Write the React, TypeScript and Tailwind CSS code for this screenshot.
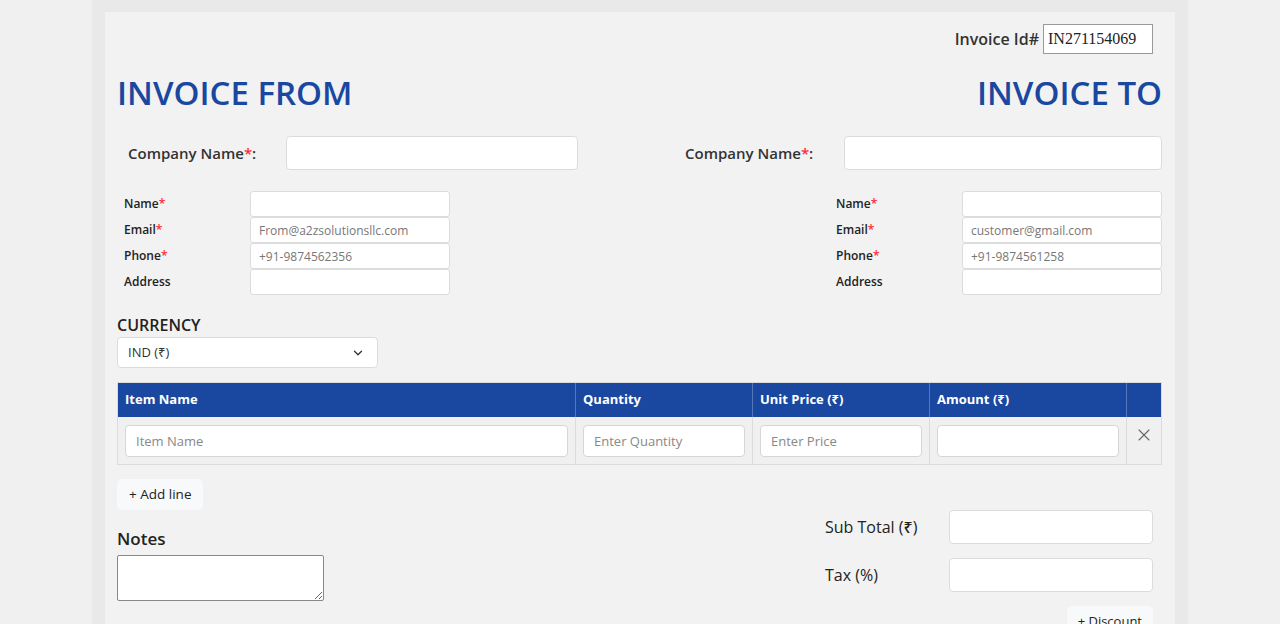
import React from 'react';
import { ChevronDown, X } from 'lucide-react';

const font = { fontFamily: '"Open Sans", "Noto Sans", sans-serif' };

interface ContactField {
  label: string;
  required: boolean;
  placeholder: string;
}

const fromFields: ContactField[] = [
  { label: 'Name', required: true, placeholder: '' },
  { label: 'Email', required: true, placeholder: 'From@a2zsolutionsllc.com' },
  { label: 'Phone', required: true, placeholder: '+91-9874562356' },
  { label: 'Address', required: false, placeholder: '' },
];

const toFields: ContactField[] = [
  { label: 'Name', required: true, placeholder: '' },
  { label: 'Email', required: true, placeholder: 'customer@gmail.com' },
  { label: 'Phone', required: true, placeholder: '+91-9874561258' },
  { label: 'Address', required: false, placeholder: '' },
];

const ContactBlock: React.FC<{ fields: ContactField[]; labelClass: string }> = ({ fields, labelClass }) => (
  <div className="flex flex-col">
    {fields.map(f => (
      <div key={f.label} className="flex items-center h-[26px]">
        <label className={`${labelClass} text-[12px] font-semibold text-[#222]`}>
          {f.label}
          {f.required && <span className="text-red-500">*</span>}
        </label>
        <input
          className="w-[200px] h-[26px] bg-white border border-[#dcdcdc] rounded-[3px] px-2 text-[12px] text-[#333] placeholder:text-[#777] outline-none"
          placeholder={f.placeholder}
        />
      </div>
    ))}
  </div>
);

const App: React.FC = () => {
  return (
    <div className="min-h-screen bg-[#f0f0f0]" style={font}>
      <div className="mx-auto w-[1096px] bg-[#e9e9e9] px-[13px] pt-3">
        <div className="bg-[#f2f2f2] pl-3 pr-[13px] pt-3 pb-10">
          {/* Invoice id */}
          <div className="flex justify-end items-center gap-1 pr-[9px] h-[30px]">
            <span className="text-[16px] font-semibold text-[#333]">Invoice Id#</span>
            <input
              className="w-[110px] h-[30px] bg-white border border-[#999] px-1 text-[16px] text-[#222] outline-none"
              style={{ fontFamily: '"Liberation Serif", serif' }}
              defaultValue="IN271154069"
            />
          </div>

          {/* Headings */}
          <div className="flex justify-between items-center mt-[16px] h-[46px]">
            <h1 className="text-[33px] font-semibold text-[#1a47a0]">INVOICE FROM</h1>
            <h1 className="text-[33px] font-semibold text-[#1a47a0]">INVOICE TO</h1>
          </div>

          {/* Company names */}
          <div className="flex justify-between items-center mt-[20px]">
            <div className="flex items-center">
              <label className="pl-[11px] w-[169px] text-[15px] font-semibold text-[#333]">
                Company Name<span className="text-red-500">*</span>:
              </label>
              <input className="w-[292px] h-[34px] bg-white border border-[#dcdcdc] rounded-[4px] outline-none" />
            </div>
            <div className="flex items-center">
              <label className="w-[159px] text-[15px] font-semibold text-[#333]">
                Company Name<span className="text-red-500">*</span>:
              </label>
              <input className="w-[318px] h-[34px] bg-white border border-[#dcdcdc] rounded-[4px] outline-none" />
            </div>
          </div>

          {/* Contact details */}
          <div className="flex justify-between mt-[21px]">
            <ContactBlock fields={fromFields} labelClass="pl-[7px] w-[133px]" />
            <ContactBlock fields={toFields} labelClass="w-[126px]" />
          </div>

          {/* Currency */}
          <div className="mt-[20px]">
            <div className="text-[16px] font-semibold text-[#222] leading-[20px]">CURRENCY</div>
            <div className="mt-[2px] w-[261px] h-[31px] bg-white border border-[#dcdcdc] rounded-[4px] flex items-center justify-between pl-[10px] pr-[12px]">
              <span className="text-[13px] text-[#333]">IND (₹)</span>
              <ChevronDown size={14} strokeWidth={2.2} className="text-[#333]" />
            </div>
          </div>

          {/* Items table */}
          <div className="mt-[14px] border border-[#dcdcdc]">
            <div className="grid grid-cols-[458px_177px_177px_197px_1fr] bg-[#1a47a0] h-[34px] text-white text-[13px] font-bold">
              <div className="flex items-center px-[7px] border-r border-[#5577bb]">Item Name</div>
              <div className="flex items-center px-[7px] border-r border-[#5577bb]">Quantity</div>
              <div className="flex items-center px-[7px] border-r border-[#5577bb]">Unit Price (₹)</div>
              <div className="flex items-center px-[7px] border-r border-[#5577bb]">Amount (₹)</div>
              <div></div>
            </div>
            <div className="grid grid-cols-[458px_177px_177px_197px_1fr] bg-[#f0f0f0] h-[47px] text-[13px]">
              <div className="flex items-center px-[7px] border-r border-[#dcdcdc]">
                <input className="w-full h-[32px] bg-white border border-[#d6d6d6] rounded-[4px] px-[10px] placeholder:text-[#888] outline-none" placeholder="Item Name" />
              </div>
              <div className="flex items-center px-[7px] border-r border-[#dcdcdc]">
                <input className="w-full h-[32px] bg-white border border-[#d6d6d6] rounded-[4px] px-[10px] placeholder:text-[#888] outline-none" placeholder="Enter Quantity" />
              </div>
              <div className="flex items-center px-[7px] border-r border-[#dcdcdc]">
                <input className="w-full h-[32px] bg-white border border-[#d6d6d6] rounded-[4px] px-[10px] placeholder:text-[#888] outline-none" placeholder="Enter Price" />
              </div>
              <div className="flex items-center px-[7px] border-r border-[#dcdcdc]">
                <input className="w-full h-[32px] bg-white border border-[#d6d6d6] rounded-[4px] px-[10px] outline-none" />
              </div>
              <div className="flex items-start justify-center pt-[8px]">
                <X size={20} strokeWidth={1.3} className="text-[#666]" />
              </div>
            </div>
          </div>

          {/* Bottom */}
          <div className="flex justify-between mt-[14px]">
            <div>
              <button className="h-[31px] px-[12px] bg-[#f8f9fa] rounded-[5px] text-[13.5px] text-[#222]">+ Add line</button>
              <div className="mt-[18px] text-[17px] font-semibold text-[#222] leading-[22px]">Notes</div>
              <textarea className="block mt-[5px] w-[207px] h-[46px] bg-white border border-[#888] rounded-[2px] outline-none" />
            </div>
            <div className="pr-[9px] pt-[31px] flex flex-col items-end">
              <div className="flex items-center">
                <span className="w-[124px] text-[16px] text-[#222] font-medium">Sub Total (₹)</span>
                <input className="w-[204px] h-[34px] bg-white border border-[#dcdcdc] rounded-[4px] outline-none" />
              </div>
              <div className="flex items-center mt-[14px]">
                <span className="w-[124px] text-[16px] text-[#222] font-medium">Tax (%)</span>
                <input className="w-[204px] h-[34px] bg-white border border-[#dcdcdc] rounded-[4px] outline-none" />
              </div>
              <button className="mt-[14px] h-[31px] px-[11px] bg-[#f8f9fa] rounded-[5px] text-[13px] text-[#222]">+ Discount</button>
            </div>
          </div>
        </div>
      </div>
    </div>
  );
};

export default App;
